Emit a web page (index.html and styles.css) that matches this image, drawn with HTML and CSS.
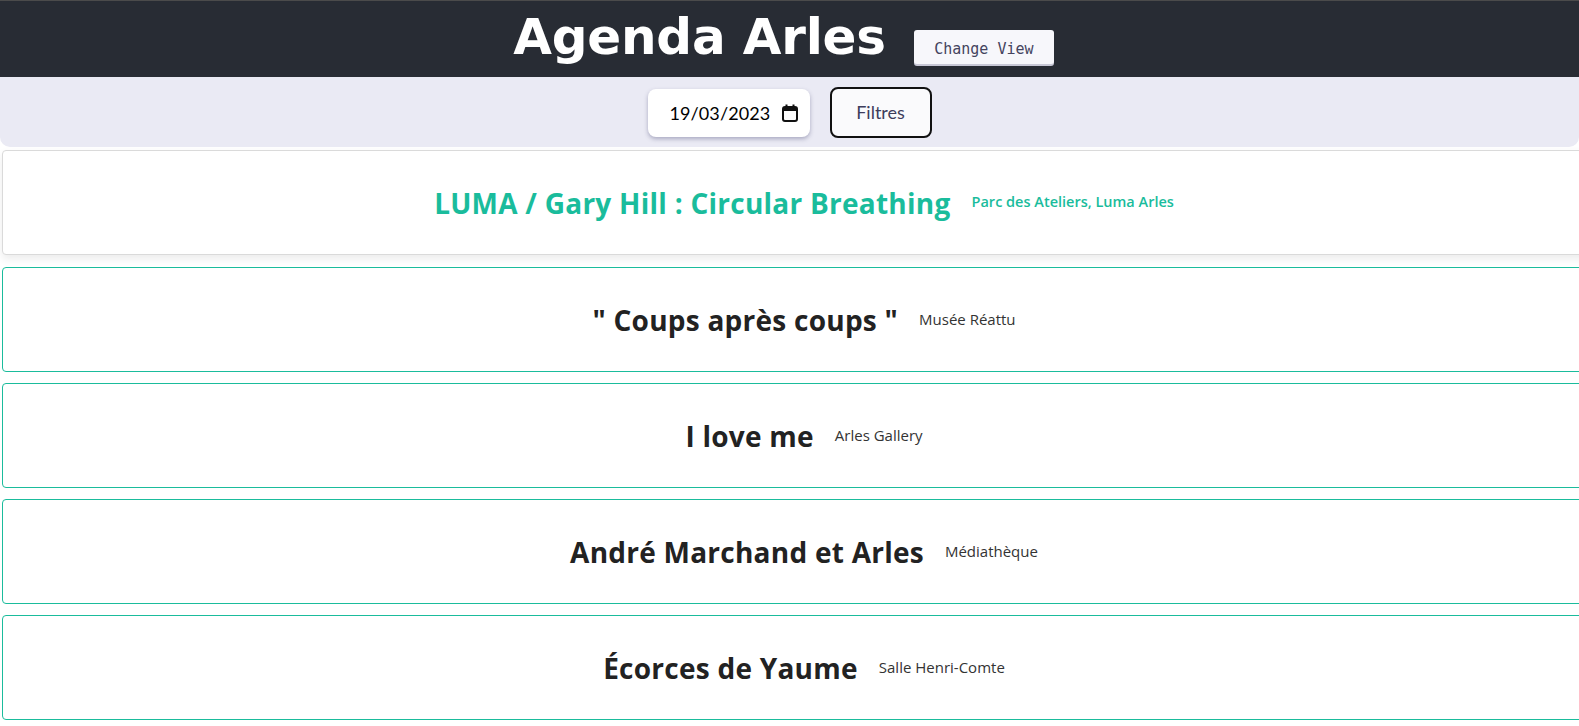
FILE: index.html
```html
<!DOCTYPE html>
<html lang="fr">
<head>
<meta charset="utf-8">
<title>Agenda Arles</title>
<link rel="stylesheet" href="styles.css">
</head>
<body>
<header class="topbar">
  <h1 class="brand">Agenda Arles</h1>
  <button class="view-btn">Change View</button>
</header>
<div class="filterbar">
  <div class="date-input">
    <span class="date-text">19/03/2023</span>
    <svg class="cal-icon" width="16" height="18" viewBox="0 0 16 18" aria-hidden="true">
      <rect x="1" y="3" width="14" height="14" rx="2" fill="none" stroke="#111" stroke-width="2"/>
      <rect x="1" y="3" width="14" height="4" fill="#111"/>
      <rect x="3.5" y="0.5" width="2" height="4" fill="#111"/>
      <rect x="10.5" y="0.5" width="2" height="4" fill="#111"/>
    </svg>
  </div>
  <button class="filter-btn">Filtres</button>
</div>
<main class="events">
  <div class="event event-active">
    <span class="event-title">LUMA / Gary Hill : Circular Breathing</span>
    <span class="event-place">Parc des Ateliers, Luma Arles</span>
  </div>
  <div class="event">
    <span class="event-title">" Coups après coups "</span>
    <span class="event-place">Musée Réattu</span>
  </div>
  <div class="event">
    <span class="event-title">I love me</span>
    <span class="event-place">Arles Gallery</span>
  </div>
  <div class="event">
    <span class="event-title">André Marchand et Arles</span>
    <span class="event-place">Médiathèque</span>
  </div>
  <div class="event">
    <span class="event-title">Écorces de Yaume</span>
    <span class="event-place">Salle Henri-Comte</span>
  </div>
</main>
</body>
</html>
```

FILE: styles.css
```css
html, body {
  margin: 0;
  padding: 0;
  overflow: hidden;
  background: #ffffff;
}

body {
  font-family: "Open Sans", "Noto Sans", sans-serif;
}

.topbar {
  height: 76px;
  background: #282c34;
  border-top: 1px solid #4b4b4b;
  display: flex;
  align-items: center;
  justify-content: center;
  gap: 28px;
  padding-right: 12px;
}

.brand {
  margin: 0;
  color: #ffffff;
  font-family: "DejaVu Sans", Verdana, sans-serif;
  font-weight: bold;
  font-size: 50px;
  line-height: 1;
  letter-spacing: -0.2px;
  padding-bottom: 4px;
}

.view-btn {
  font-family: "DejaVu Sans Mono", "Liberation Mono", monospace;
  font-size: 15px;
  color: #44445e;
  background: #f7f7fb;
  border: none;
  border-radius: 3px;
  box-shadow: 0 2px 0 #c8c8d6;
  width: 140px;
  height: 34px;
  margin-top: 16px;
  padding: 3px 0 0 0;
}

.filterbar {
  height: 70px;
  background: #eaeaf4;
  border-radius: 0 0 10px 10px;
  display: flex;
  align-items: center;
  justify-content: center;
  gap: 20px;
}

.date-input {
  width: 162px;
  height: 48px;
  box-sizing: border-box;
  background: #ffffff;
  border-radius: 8px;
  box-shadow: 0 2px 4px rgba(90, 90, 130, 0.45);
  display: flex;
  align-items: center;
  padding: 0 12px 0 22px;
  justify-content: space-between;
  margin-top: 1px;
}

.date-text {
  font-family: "Lato", "Open Sans", sans-serif;
  font-size: 18px;
  color: #000000;
  letter-spacing: 0.1px;
}

.cal-icon {
  display: block;
}

.filter-btn {
  width: 102px;
  height: 51px;
  box-sizing: border-box;
  border: 2px solid #111111;
  border-radius: 8px;
  background: #fafafc;
  font-family: "Lato", "Open Sans", sans-serif;
  font-size: 18px;
  color: #3d3d5c;
  padding: 0;
}

.events {
  display: flex;
  flex-direction: column;
  gap: 11px;
  padding-top: 3px;
}

.event {
  margin-left: 2px;
  width: 1604px;
  height: 105px;
  box-sizing: border-box;
  border: 1px solid #1abc9c;
  border-radius: 4px;
  display: flex;
  align-items: center;
  justify-content: center;
  gap: 21px;
  background: #ffffff;
}

.event-active {
  border-color: #dadada;
  box-shadow: 0 4px 8px rgba(0, 0, 0, 0.08);
  margin-bottom: 1px;
}

.event-title {
  font-size: 28px;
  font-weight: 700;
  color: #222222;
  letter-spacing: 0.25px;
}

.event-place {
  font-size: 15px;
  color: #333333;
  padding-bottom: 2px;
}

.event-active .event-title,
.event-active .event-place {
  color: #1abc9c;
}

.event-active .event-place {
  font-weight: 600;
  font-size: 14.5px;
}
```
